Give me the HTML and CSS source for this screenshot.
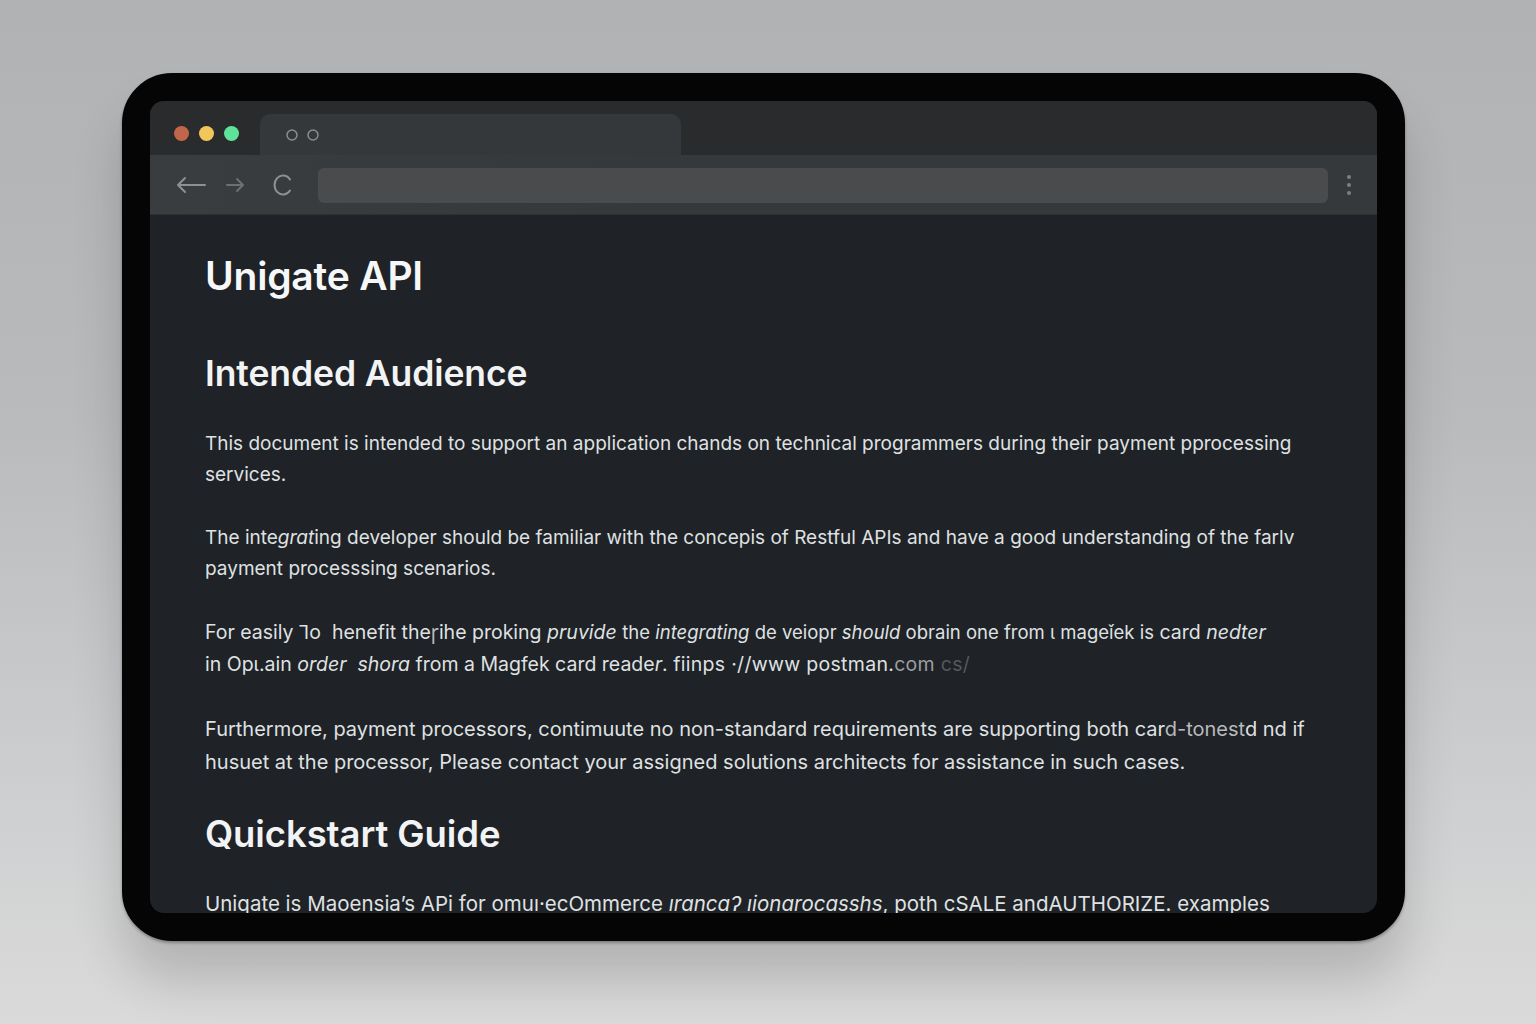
FILE: index.html
```html
<!DOCTYPE html>
<html lang="en">
<head>
<meta charset="utf-8">
<title>Unigate API</title>
<link rel="stylesheet" href="styles.css">
</head>
<body>
<div class="stage">
  <div class="device">
    <div class="screen">
      <div class="tabbar">
        <div class="lights">
          <span class="light red"></span>
          <span class="light yellow"></span>
          <span class="light green"></span>
        </div>
        <div class="tab">
          <svg class="tab-icons" width="40" height="14" viewBox="0 0 40 14">
            <circle cx="7" cy="7" r="5" fill="none" stroke="#8a8c8f" stroke-width="1.5"/>
            <circle cx="28" cy="7" r="5" fill="none" stroke="#8a8c8f" stroke-width="1.5"/>
          </svg>
        </div>
      </div>
      <div class="toolbar">
        <div class="navs">
          <svg class="nav back" width="32" height="20" viewBox="0 0 32 20">
            <path d="M30 10H3M10 3L3 10L10 17" fill="none" stroke="#8e9093" stroke-width="2" stroke-linecap="round" stroke-linejoin="round"/>
          </svg>
          <svg class="nav fwd" width="20" height="20" viewBox="0 0 20 20">
            <path d="M2 10H18M12 4L18 10L12 16" fill="none" stroke="#6d7073" stroke-width="2" stroke-linecap="round" stroke-linejoin="round"/>
          </svg>
          <svg class="nav reload" width="20" height="24" viewBox="0 0 20 24">
            <path d="M17 6.5A8.5 9.5 0 1 0 17 17.5" fill="none" stroke="#8e9093" stroke-width="2" stroke-linecap="round"/>
          </svg>
        </div>
        <div class="address"></div>
        <div class="kebab"><span></span><span></span><span></span></div>
      </div>
      <div class="content">
        <h1>Unigate API</h1>
        <h2>Intended Audience</h2>
        <p>This document is intended to support an application chands on technical programmers during their payment pprocessing<br>services.</p>
        <p>The inte<em>grat</em>ing developer should be familiar with the concepis of Restful APIs and have a good understanding of the farlv<br>payment processsing scenarios.</p>
        <p class="p3">For easily Ꞁo&nbsp; henefit the<span class="ghost">ꞅ</span>ihe proking <em>pruvide</em> <span class="narrow">the <em>integrating</em> de veiopr <em>should</em> obrain one from ɩ mageǐek is</span> card <em>nedter</em><br>in Opɩ.ain <em>order&nbsp; shora</em> from a Magfek card reade<em>r</em>. <span class="narrow2">fiinps ·//www postman.<span class="dim">com</span> <span class="dimmer">cs/</span></span></p>
        <p class="p4">Furthermore, payment processors, contimuute no non-standard requirements are supporting both car<span class="ghost">d-tonest</span>d nd if<br>husuet at the processor, Please contact your assigned solutions architects for assistance in such cases.</p>
        <h2 class="qs">Quickstart Guide</h2>
        <p class="last">Uniqate is Maoensia’s APi for omuı·ecOmmerce <em>ırancaʔ ıionarocasshs</em>, poth cSALE andAUTHORIZE. examples</p>
      </div>
    </div>
  </div>
</div>
</body>
</html>
```

FILE: styles.css
```css
html, body {
  margin: 0;
  padding: 0;
}
body {
  width: 1536px;
  height: 1024px;
  overflow: hidden;
  font-family: Inter, "Noto Sans", "Liberation Sans", sans-serif;
  background: linear-gradient(180deg, #b1b2b4 0%, #b9babc 40%, #cfd0d1 80%, #dadada 100%);
}
.stage {
  padding: 73px 0 0 122px;
}
.device {
  width: 1227px;
  height: 812px;
  border: 28px solid #050505;
  border-radius: 50px;
  background: #050505;
  box-shadow: 0 40px 50px rgba(0, 0, 0, 0.16), 0 2px 3px rgba(0, 0, 0, 0.3);
}
.screen {
  height: 812px;
  border-radius: 14px;
  overflow: hidden;
  display: flex;
  flex-direction: column;
  background: #1f2226;
}
.tabbar {
  height: 54px;
  flex: none;
  background: #2a2b2d;
  display: flex;
  align-items: flex-end;
}
.lights {
  display: flex;
  gap: 10px;
  padding: 0 0 14px 24px;
  width: 86px;
  box-sizing: content-box;
}
.light {
  width: 15px;
  height: 15px;
  border-radius: 50%;
}
.red { background: #c2664b; }
.yellow { background: #f1c75b; }
.green { background: #5fe39b; }
.tab {
  width: 421px;
  height: 41px;
  background: #35383b;
  border-radius: 10px 10px 0 0;
  display: flex;
  align-items: center;
  padding-left: 25px;
  box-sizing: border-box;
}
.tab-icons {
  display: block;
}
.toolbar {
  height: 60px;
  flex: none;
  background: linear-gradient(90deg, #3a3d40 0%, #36393c 40%, #36393c 100%);
  display: flex;
  align-items: center;
  box-shadow: inset 0 -1px 0 #2e3134;
}
.navs {
  display: flex;
  align-items: center;
  padding-left: 25px;
  width: 168px;
  box-sizing: border-box;
}
.nav { display: block; }
.back { margin-right: 18px; }
.fwd { margin-right: 28px; }
.address {
  width: 1010px;
  height: 35px;
  background: #4a4b4d;
  border-radius: 6px;
}
.kebab {
  display: flex;
  flex-direction: column;
  gap: 4px;
  margin-left: 19px;
}
.kebab span {
  width: 4px;
  height: 4px;
  border-radius: 50%;
  background: #7c7f82;
}
.content {
  flex: 1;
  padding: 37px 40px 0 55px;
  color: #dfe1e3;
  overflow: hidden;
}
h1 {
  margin: 0 0 52px;
  font-size: 39px;
  line-height: 48px;
  font-weight: 600;
  color: #f6f7f8;
  letter-spacing: -0.2px;
}
h2 {
  margin: 0 0 32px;
  font-size: 35.5px;
  line-height: 44px;
  font-weight: 600;
  color: #f2f3f4;
  letter-spacing: -0.1px;
}
p {
  margin: 0 0 32px;
  font-size: 19px;
  line-height: 31px;
  font-weight: 400;
  white-space: nowrap;
}
em {
  font-style: italic;
}
.narrow {
  font-size: 18.5px;
}
.narrow2 {
  font-size: 19.5px;
  letter-spacing: 0.3px;
}
.p3 {
  margin-bottom: 33px;
  font-size: 19.5px;
  line-height: 32px;
}
.p4 {
  font-size: 20px;
  line-height: 33px;
}
.ghost {
  color: #b8babd;
}
.dim {
  color: #9b9ea1;
}
.dimmer {
  color: #55585c;
}
.qs {
  font-size: 36.5px;
  margin-top: 33px;
  margin-bottom: 32px;
}
.last {
  margin: 0;
  font-size: 20.5px;
}
```
